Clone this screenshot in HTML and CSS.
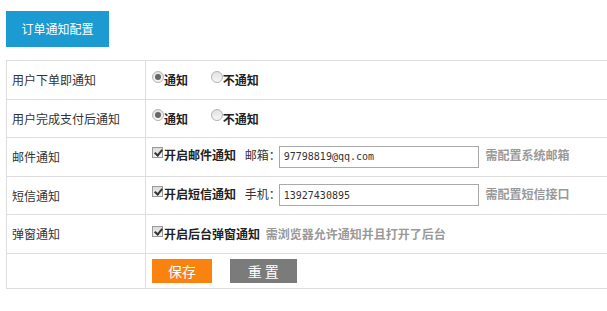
FILE: index.html
```html
<!DOCTYPE html>
<html lang="zh-CN">
<head>
<meta charset="UTF-8">
<meta name="viewport" content="width=device-width, initial-scale=1.0">
<title>订单通知配置</title>
<link rel="stylesheet" href="styles.css">
</head>
<body>
<div class="page">
  <div class="tab-title">订单通知配置</div>
  <table class="config-table">
    <tr>
      <td class="label">用户下单即通知</td>
      <td>
        <label class="opt"><input type="radio" name="order" checked><b>通知</b></label>
        <label class="opt"><input type="radio" name="order"><b>不通知</b></label>
      </td>
    </tr>
    <tr>
      <td class="label">用户完成支付后通知</td>
      <td>
        <label class="opt"><input type="radio" name="pay" checked><b>通知</b></label>
        <label class="opt"><input type="radio" name="pay"><b>不通知</b></label>
      </td>
    </tr>
    <tr>
      <td class="label">邮件通知</td>
      <td>
        <label class="opt"><input type="checkbox" checked><b>开启邮件通知</b></label>
        <span class="field-name">邮箱：</span><input class="text-input" type="text" value="97798819@qq.com">
        <span class="hint">需配置系统邮箱</span>
      </td>
    </tr>
    <tr>
      <td class="label">短信通知</td>
      <td>
        <label class="opt"><input type="checkbox" checked><b>开启短信通知</b></label>
        <span class="field-name">手机：</span><input class="text-input" type="text" value="13927430895">
        <span class="hint">需配置短信接口</span>
      </td>
    </tr>
    <tr>
      <td class="label">弹窗通知</td>
      <td>
        <label class="opt"><input type="checkbox" checked><b>开启后台弹窗通知</b></label>
        <span class="hint hint-near">需浏览器允许通知并且打开了后台</span>
      </td>
    </tr>
    <tr class="last-row">
      <td class="label"></td>
      <td>
        <button class="btn btn-save">保存</button>
        <button class="btn btn-reset">重 置</button>
      </td>
    </tr>
  </table>
</div>
</body>
</html>
```

FILE: styles.css
```css
body {
  margin: 0;
  font-family: "Noto Sans CJK SC", "Liberation Sans", sans-serif;
  font-size: 12px;
  color: #333;
  background: #fff;
}

.page {
  padding: 11px 0 0 6px;
}

.tab-title {
  width: 103px;
  height: 36px;
  line-height: 36px;
  text-align: center;
  background-color: #1b9bd1;
  color: #fff;
  font-size: 12px;
  margin-bottom: 13px;
}

.config-table {
  width: 601px;
  border-collapse: collapse;
}

.config-table td {
  border: 1px solid #ddd;
  height: 37.5px;
  padding: 0 6px;
  vertical-align: middle;
  white-space: nowrap;
}

.config-table td:last-child {
  border-right: none;
}

.config-table td.label {
  width: 127px;
  padding-left: 5px;
}

.config-table .last-row td {
  height: 34px;
}

.opt {
  display: inline-flex;
  align-items: center;
  margin-right: 20px;
  color: #222;
}

.opt b {
  font-weight: bold;
}

input[type="radio"] {
  appearance: none;
  width: 12px;
  height: 12px;
  margin: 0;
  border: 1px solid #b4b4b4;
  border-radius: 50%;
  background: linear-gradient(#e2e2e2, #f6f6f6);
  position: relative;
  top: -3px;
}

input[type="radio"]:checked::after {
  content: "";
  position: absolute;
  left: 2px;
  top: 2px;
  width: 6px;
  height: 6px;
  border-radius: 50%;
  background: #666;
}

input[type="checkbox"] {
  appearance: none;
  width: 11px;
  height: 11px;
  margin: 0 1px 0 0;
  border: 1px solid #999;
  background: linear-gradient(#dcdcdc, #f2f2f2);
  position: relative;
  top: -2px;
}

input[type="checkbox"]:checked::after {
  content: "";
  position: absolute;
  left: 3px;
  top: 0px;
  width: 3px;
  height: 6px;
  border: solid #333;
  border-width: 0 2px 2px 0;
  transform: rotate(40deg);
}

.config-table td .opt:has(input[type="checkbox"]) {
  margin-right: 6px;
}

.field-name {
  color: #333;
  margin-right: -2px;
}

.text-input {
  width: 200px;
  height: 22px;
  box-sizing: border-box;
  border: 1px solid #a9a9a9;
  padding: 0 4px;
  font-family: "DejaVu Sans Mono", monospace;
  font-size: 10px;
  color: #333;
  vertical-align: middle;
}

.hint {
  color: #999;
  font-weight: bold;
  margin-left: 4px;
}

.hint-near {
  margin-left: -3px;
}

.btn {
  height: 24px;
  border: none;
  color: #fff;
  font-family: "Noto Sans CJK SC", sans-serif;
  font-size: 14px;
  padding: 0;
  cursor: pointer;
  vertical-align: middle;
}

.btn-save {
  width: 60px;
  background-color: #fa820f;
  margin-right: 15px;
}

.btn-reset {
  width: 67px;
  background-color: #7b7b7b;
}
```
